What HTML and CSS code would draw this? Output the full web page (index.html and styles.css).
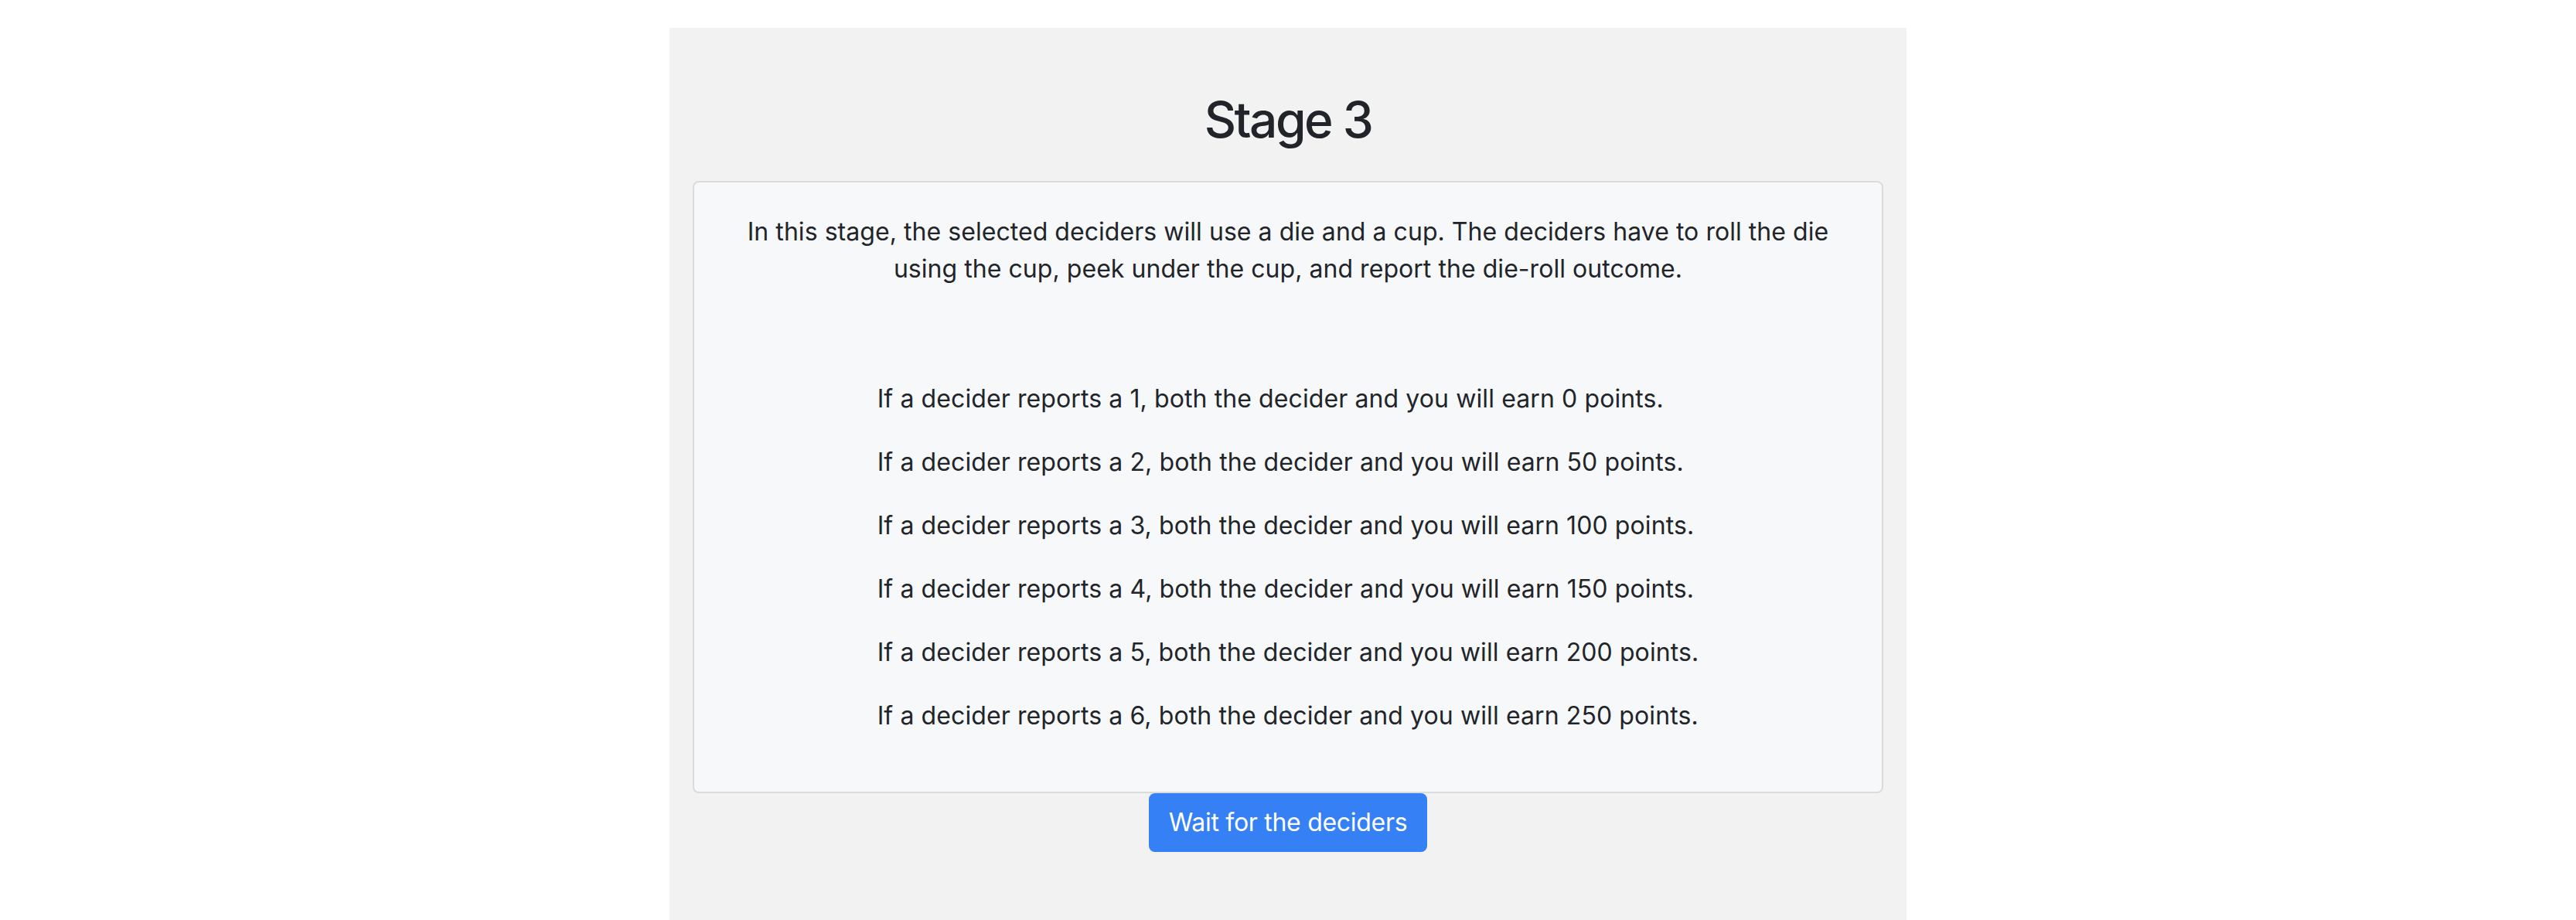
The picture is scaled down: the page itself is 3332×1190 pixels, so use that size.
FILE: index.html
```html
<!DOCTYPE html>
<html lang="en">
<head>
<meta charset="utf-8">
<title>Stage 3</title>
<link rel="stylesheet" href="styles.css">
</head>
<body>
<main class="panel">
  <h2 class="title">Stage 3</h2>
  <section class="card">
    <p class="intro">In this stage, the selected deciders will use a die and a cup. The deciders have to roll the die using the cup, peek under the cup, and report the die-roll outcome.</p>
    <div class="rules">
      <p class="rule">If a decider reports a 1, both the decider and you will earn 0 points.</p>
      <p class="rule">If a decider reports a 2, both the decider and you will earn 50 points.</p>
      <p class="rule">If a decider reports a 3, both the decider and you will earn 100 points.</p>
      <p class="rule">If a decider reports a 4, both the decider and you will earn 150 points.</p>
      <p class="rule">If a decider reports a 5, both the decider and you will earn 200 points.</p>
      <p class="rule">If a decider reports a 6, both the decider and you will earn 250 points.</p>
    </div>
  </section>
  <div class="actions">
    <button class="btn" type="button">Wait for the deciders</button>
  </div>
</main>
</body>
</html>
```

FILE: styles.css
```css
html, body {
  margin: 0;
  padding: 0;
  background: #ffffff;
}

body {
  font-family: Inter, "Noto Sans", "Liberation Sans", sans-serif;
  font-size: 32px;
  line-height: 1.5;
  color: #212529;
  padding-top: 36px;
}

.panel {
  width: 1600px;
  margin: 0 auto;
  background: #f2f2f2;
  padding: 81px 30px 0;
  box-sizing: border-box;
  min-height: calc(100vh - 36px);
}

.title {
  margin: 0 0 40px;
  font-size: 64px;
  font-weight: 500;
  letter-spacing: -2.5px;
  line-height: 1.2;
  text-align: center;
  color: #212529;
}

.card {
  background: #f7f8fa;
  border: 2px solid #dadbdd;
  border-radius: 8px;
  padding: 40px 40px 40px;
  text-align: center;
}

.intro {
  margin: 0 0 120px;
  letter-spacing: 0.05px;
}

.rules {
  display: inline-block;
  text-align: left;
  letter-spacing: 0.1px;
}

.rule {
  margin: 0 0 34px;
}

.actions {
  display: flex;
  justify-content: center;
}

.btn {
  font-family: inherit;
  font-size: 32px;
  line-height: 1.5;
  letter-spacing: -0.3px;
  color: #ffffff;
  background: #3580f5;
  border: 2px solid #3580f5;
  border-radius: 8px;
  padding: 12px 24px;
  height: 76px;
}
```
